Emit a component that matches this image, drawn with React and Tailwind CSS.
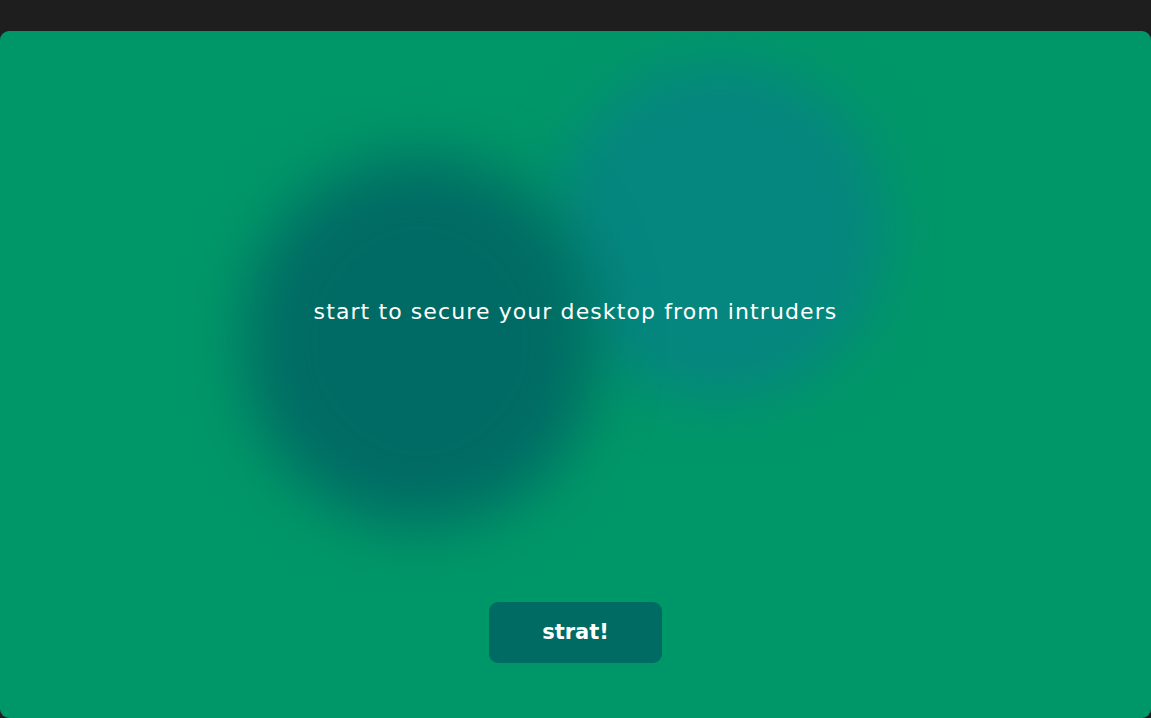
import React from "react";

export default function App() {
  return (
    <div className="w-[1151px] h-[718px] bg-[#1e1e1e] pt-[31px] overflow-hidden" style={{ fontFamily: '"DejaVu Sans", "Liberation Sans", sans-serif' }}>
      <div className="relative h-[687px] rounded-[9px] bg-[#009768] flex flex-col items-center overflow-hidden">
        <div className="absolute left-[555px] top-[30px] w-[330px] h-[340px] rounded-full bg-[#05867f] blur-[28px]" />
        <div className="absolute left-[245px] top-[125px] w-[350px] h-[370px] rounded-full bg-[#006b64] blur-[30px]" />
        <p className="relative mt-[266px] text-[22px] leading-[30px] tracking-[1.1px] text-white">
          start to secure your desktop from intruders
        </p>
        <button className="relative mt-[275px] w-[173px] h-[61px] rounded-[9px] bg-[#006b63] text-white text-[21px] font-bold">
          strat!
        </button>
      </div>
    </div>
  );
}
